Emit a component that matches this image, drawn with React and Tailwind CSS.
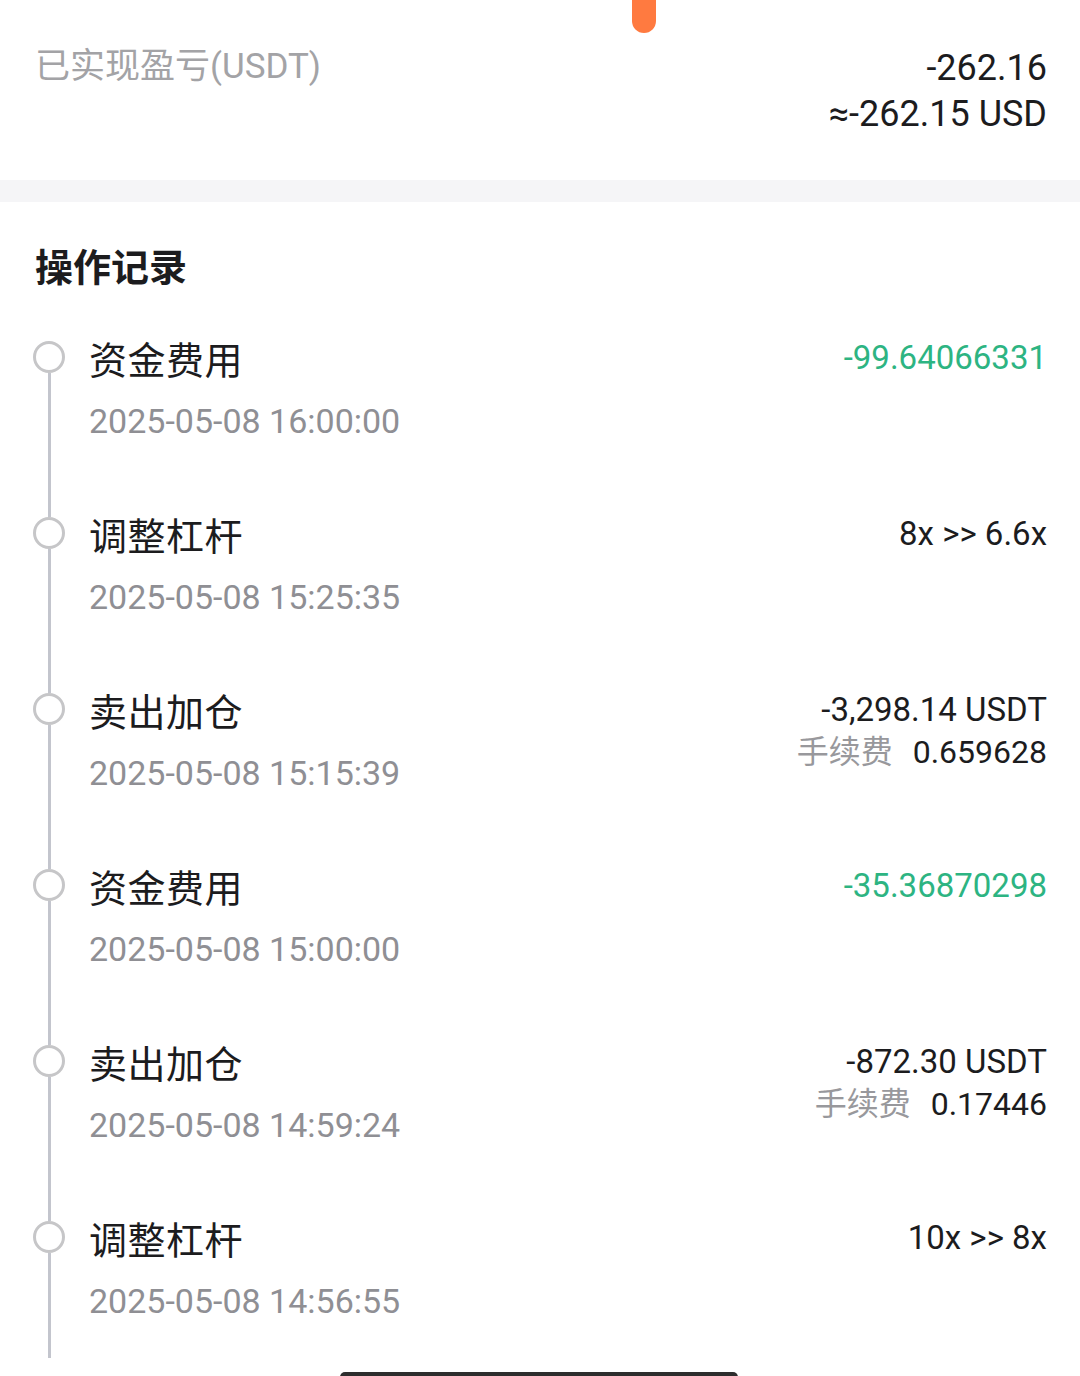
import React from "react";

const items = [
  { title: "资金费用", date: "2025-05-08 16:00:00", value: "-99.64066331", green: true },
  { title: "调整杠杆", date: "2025-05-08 15:25:35", value: "8x >> 6.6x" },
  { title: "卖出加仓", date: "2025-05-08 15:15:39", value: "-3,298.14 USDT", fee: "0.659628" },
  { title: "资金费用", date: "2025-05-08 15:00:00", value: "-35.36870298", green: true },
  { title: "卖出加仓", date: "2025-05-08 14:59:24", value: "-872.30 USDT", fee: "0.17446" },
  { title: "调整杠杆", date: "2025-05-08 14:56:55", value: "10x >> 8x", last: true },
];

function Item({ it }) {
  return (
    <div className={`flex pl-[33px] pr-[33px] ${it.last ? "h-[137px]" : "h-[176px]"}`}>
      <div className="flex w-[32px] shrink-0 flex-col items-center">
        <div className="h-[32px] w-[32px] shrink-0 rounded-full border-[3px] border-[#c6c6c8] bg-white" />
        <div className="w-[3px] flex-1 bg-[#c3c5cd]" />
      </div>
      <div className="ml-[24px] flex flex-1 items-start justify-between">
        <div className="flex flex-col">
          <div className="text-[38px] leading-[40px] tracking-[0.5px] text-[#1c1c1e]">{it.title}</div>
          <div className="mt-[20px] text-[34px] leading-[40px] text-[#8f8f94]">{it.date}</div>
        </div>
        <div className="-mt-[3px] flex flex-col items-end">
          <div className={`text-[33px] leading-[40px] ${it.green ? "text-[#2db482]" : "text-[#1c1c1e]"}`}>
            {it.value}
          </div>
          {it.fee && (
            <div className="flex text-[32px] leading-[44px]">
              <span className="text-[#98989c]">手续费</span>
              <span className="ml-[20px] text-[#1c1c1e]">{it.fee}</span>
            </div>
          )}
        </div>
      </div>
    </div>
  );
}

export default function App() {
  return (
    <div className="relative h-[1376px] w-[1080px] overflow-hidden bg-white font-['Roboto','Noto_Sans_CJK_SC',sans-serif]">
      <div className="absolute left-[632px] top-0 h-[33px] w-[24px] rounded-b-full bg-[#ff7a40]" />

      <div className="flex h-[180px] justify-between pl-[35px] pr-[33px] pt-[45px]">
        <div className="text-[35px] leading-[44px] text-[#a3a3a6]">已实现盈亏(USDT)</div>
        <div className="flex flex-col items-end text-[36px] leading-[46px] text-[#1c1c1e]">
          <div>-262.16</div>
          <div>≈-262.15 USD</div>
        </div>
      </div>

      <div className="h-[22px] bg-[#f5f5f7]" />

      <div className="px-[35px] pt-[42px]">
        <div className="text-[38px] font-bold leading-[48px] text-[#1c1c1e]">操作记录</div>
      </div>

      <div className="mt-[49px] flex flex-col">
        {items.map((it, i) => (
          <Item key={i} it={it} />
        ))}
      </div>

      <div className="absolute left-[340px] top-[1372px] h-[10px] w-[398px] rounded-full bg-[#2d2d2d]" />
    </div>
  );
}
